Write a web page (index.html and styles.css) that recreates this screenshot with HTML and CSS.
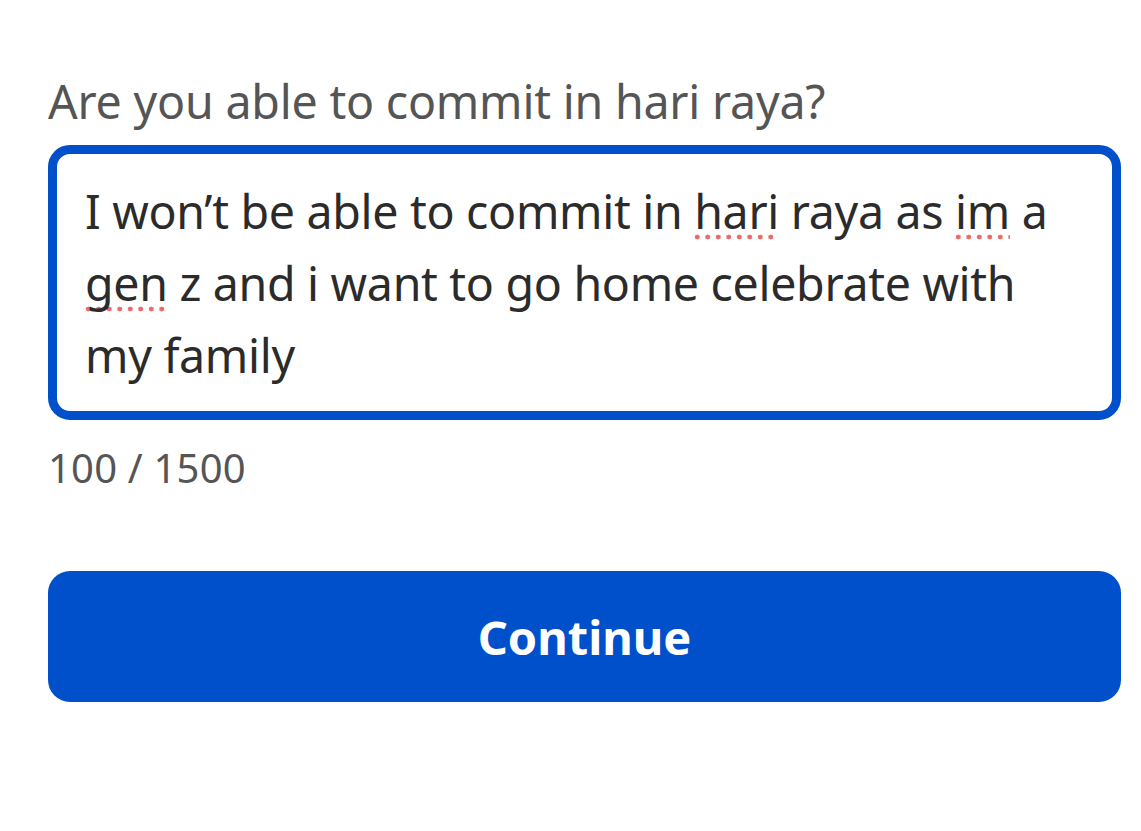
FILE: index.html
```html
<!DOCTYPE html>
<html lang="en">
<head>
<meta charset="utf-8">
<title>Question</title>
<link rel="stylesheet" href="styles.css">
</head>
<body>
<main class="form">
  <label class="question">Are you able to commit in hari raya?</label>
  <div class="answer" role="textbox" aria-multiline="true">I won’t be able to commit in <span class="misspelt">hari</span> raya as <span class="misspelt">im</span> a <span class="misspelt">gen</span> z and i want to go home celebrate with my family</div>
  <div class="counter">100 / 1500</div>
  <button class="continue" type="button">Continue</button>
</main>
</body>
</html>
```
FILE: styles.css
```css
* { box-sizing: border-box; }
html, body { margin: 0; padding: 0; background: #ffffff; }
body { font-family: "Noto Sans", "Open Sans", sans-serif; }
.form {
  display: flex;
  flex-direction: column;
  padding: 72px 20px 0 48px;
}
.question {
  font-size: 46.5px;
  line-height: 58px;
  color: #555555;
  letter-spacing: -0.2px;
}
.answer {
  margin-top: 15px;
  border: 9px solid #0050cc;
  border-radius: 22px;
  padding: 21px 60px 20px 28px;
  font-size: 46.5px;
  line-height: 72px;
  color: #2b2b2b;
  letter-spacing: -0.3px;
}
.misspelt {
  background-image: radial-gradient(circle, #f06868 2.2px, transparent 2.7px);
  background-size: 10.5px 6px;
  background-repeat: repeat-x;
  background-position: -2px calc(100% - 3px);
}
.counter {
  margin-top: 20px;
  font-size: 40px;
  line-height: 56px;
  color: #555555;
  letter-spacing: 0.2px;
}
.continue {
  margin-top: 75px;
  height: 131px;
  border: none;
  border-radius: 22px;
  background: #0050cc;
  color: #ffffff;
  font-family: "Noto Sans", "Open Sans", sans-serif;
  font-weight: 700;
  font-size: 47px;
  cursor: pointer;
}
```
